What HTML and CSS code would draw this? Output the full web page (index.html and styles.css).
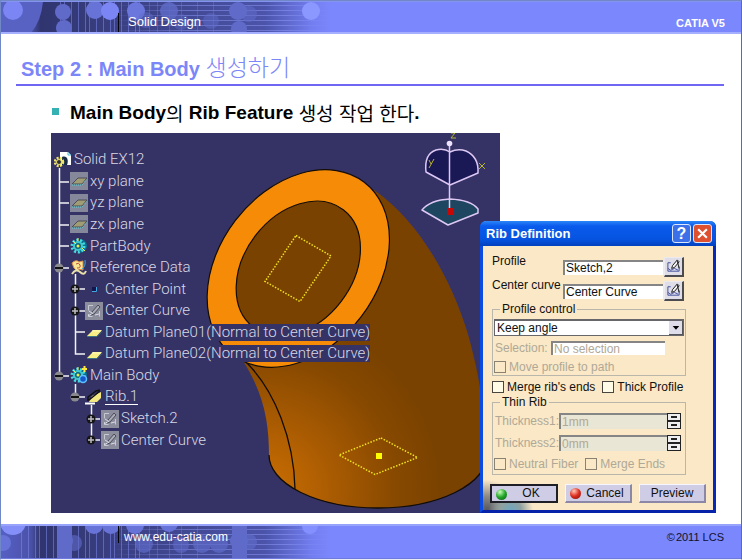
FILE: index.html
```html
<!DOCTYPE html>
<html lang="ko">
<head>
<meta charset="utf-8">
<title>Solid Design - CATIA V5</title>
<link rel="stylesheet" href="styles.css">
</head>
<body>
<svg class="defs" aria-hidden="true">
  <defs>
    <linearGradient id="fade" x1="0" x2="1" y1="0" y2="0">
      <stop offset="0" stop-color="#5660c4"/><stop offset=".09" stop-color="#4a52a8"/><stop offset=".12" stop-color="#30356f"/>
      <stop offset=".55" stop-color="#414892"/><stop offset=".8" stop-color="#4b54aa"/><stop offset=".94" stop-color="#727df0"/><stop offset="1" stop-color="#7b87fc"/>
    </linearGradient>
    <linearGradient id="lineFade" x1="0" x2="1" y1="0" y2="0">
      <stop offset="0" stop-color="#8f9af8" stop-opacity="0"/><stop offset=".35" stop-color="#8f9af8" stop-opacity=".5"/>
      <stop offset=".8" stop-color="#8f9af8" stop-opacity=".5"/><stop offset="1" stop-color="#8f9af8" stop-opacity="0"/>
    </linearGradient>
    <pattern id="bars" width="25" height="34" patternUnits="userSpaceOnUse">
      <path d="M2.500 0V34M9.500 0V34M13.500 0V34M20.500 0V34" stroke="#7c87e6" stroke-opacity=".55"/>
    </pattern>
    <symbol id="i-plane" viewBox="0 0 18 18">
      <path d="M0 0h18v18H0z" fill="#85879b"/><path d="M2 12 8 6h9l-5 6z" fill="#a09c73" stroke="#4b4c58"/><path d="M2 13h10l5-6" fill="none" stroke="#65d0d4" stroke-dasharray="1 1"/>
    </symbol>
    <symbol id="i-datum" viewBox="0 0 18 18">
      <path d="M2 13 8 7h9l-5 6z" fill="#f7ef86"/><path d="M2 13.500h10l5-5" fill="none" stroke="#3d7481"/><path d="M7 8h9" stroke="#fffcc0"/>
    </symbol>
    <symbol id="i-gear" viewBox="0 0 18 18">
      <path d="M10 2c5 0 7 4 7 7s-3 7-8 7z" fill="#0d6d91"/>
      <circle cx="8" cy="9" r="6" fill="none" stroke="#46dbe0" stroke-width="3" stroke-dasharray="2 1.700"/>
      <circle cx="8" cy="9" r="4" fill="#136378" stroke="#3fc8cf" stroke-width="2"/><circle cx="8" cy="9" r="1.500" fill="#e5ef54"/>
      <path d="M3 4 6 7M12 11l3 3M8 1v3" stroke="#e3f25d"/>
    </symbol>
    <symbol id="i-sketch" viewBox="0 0 18 18">
      <path d="M0 0h18v18H0z" fill="#8b8d9d"/><path d="M8 3.500H3.500v5M3.500 12v2.500h4M14.500 9v5.500" fill="none" stroke="#c6c8d4"/>
      <path d="m7 10 6-7 2 2-6 7-3 1z" fill="#a9abb8" stroke="#4a4c58"/><path d="m3 14 5-3M10 13l4-1M4 9l3 2" stroke="#dddee8"/>
    </symbol>
    <symbol id="pen" viewBox="0 0 16 16">
      <path d="M5 4H2v9h12V8M2 10l3 2 4-2 4 2" fill="none" stroke="#3f4d9b"/><path d="m6 10 1-3 5-6 2 2-5 6z" fill="#f4f4f4" stroke="#111"/><path d="m12 2 2 8" stroke="#111"/>
    </symbol>
    <symbol id="plus" viewBox="0 0 10 10"><circle cx="5" cy="5" r="4.500" fill="#151515"/><path d="M2 5h6M5 2v6" stroke="#bcbcc2" stroke-width="1.500"/></symbol>
    <symbol id="minus" viewBox="0 0 10 10"><circle cx="5" cy="5" r="4.500" fill="#8a8a8e"/><path d="M1 5h8" stroke="#111" stroke-width="2"/></symbol>
  </defs>
</svg>
<div class="slide">
  <header class="band band-top">
    <svg class="art" viewBox="0 0 330 32" preserveAspectRatio="xMinYMin slice" aria-hidden="true">
      <rect width="330" height="32" fill="url(#fade)"/>
      <path d="M0 0h42q-2 20-13 32H0z" fill="#5762c2"/>
      <rect x="55" width="90" height="32" fill="url(#bars)"/>
      <path d="M110 3.500H330M110 8.500H330M110 13.500H330M110 18.500H330M110 23.500H330M110 28.500H330" stroke="url(#lineFade)"/>
      <path d="M148.500 0V32M156.500 0V32M168.500 0V32M180.500 0V32M196.500 0V32M212.500 0V32" stroke="#7a85e0" stroke-opacity=".35"/>
      <g fill="#7b86f4"><circle cx="12" cy="8" r="10"/><circle cx="94" cy="8" r="9" fill="#6873d8"/><circle cx="109" cy="9" r="9"/><circle cx="135" cy="9" r="9" fill="#6c77de"/><circle cx="310" cy="9" r="9" fill="#8b98ff"/></g>
      <g fill="#606bc9"><circle cx="62" cy="10" r="8"/><circle cx="63" cy="26" r="8"/><circle cx="168" cy="9" r="9" opacity=".8"/><circle cx="145" cy="18" r="8" opacity=".5"/><circle cx="237" cy="9" r="9"/><circle cx="238" cy="27" r="8"/><circle cx="248" cy="12" r="8" opacity=".6"/><circle cx="180" cy="20" r="8" opacity=".4"/><circle cx="210" cy="19" r="8" opacity=".5"/></g>
    </svg>
    <span class="band-title">Solid Design</span>
    <strong class="brand">CATIA V5</strong>
  </header>

  <main class="content">
    <h1>Step 2 : Main Body <span class="ko">생성하기</span></h1>
    <p class="lead">Main Body<span class="ko">의</span> Rib Feature <span class="ko">생성 작업 한다</span>.</p>

    <div class="stage">
      <div class="viewport">
        <svg class="scene" viewBox="51 133 449 380" preserveAspectRatio="xMinYMin slice" role="img" aria-label="Rib model">
          <defs>
            <radialGradient id="body" gradientUnits="userSpaceOnUse" cx="265" cy="490" r="175">
              <stop offset="0" stop-color="#cb6f02"/><stop offset=".35" stop-color="#ad5d02"/><stop offset=".75" stop-color="#874900"/><stop offset="1" stop-color="#7a4200"/>
            </radialGradient>
          </defs>
          <path d="M374 190C420 222 451 280 467 331C478 368 487 420 487 455A109 53 0 0 1 269 455C269 425 265 395 243 361L230 330Z" fill="url(#body)"/>
          <path d="M487 455A109 53 0 0 1 269 455M245 361C275 390 294 440 295 489" fill="none" stroke="#120c05" stroke-width="1.300"/>
          <g transform="rotate(-52.600 298.300 268.500)" stroke="#120c05" stroke-width="1.200">
            <ellipse cx="298.300" cy="268.500" rx="108.600" ry="79.200" fill="#f58b07"/>
            <ellipse cx="298.300" cy="268.500" rx="74" ry="54" fill="#7a4200"/>
          </g>
          <g fill="none" stroke="#f1e51c" stroke-width="1.500" stroke-dasharray="1.500 1.500"><path d="M296 235.500 331 256 300 301.500 265 281.500Z"/><path d="M381 438 417.500 457.500 375 474.500 339 455Z"/></g>
          <path d="M376 453h6v6h-6z" fill="#ff0"/>
          <g stroke="#dcc8f3" stroke-width="1.500" stroke-linejoin="round">
            <path d="M450 185 426 172Q424 154 436 150Q444 148 450 152Q458 148 466 151Q479 157 478 173Z" fill="#1b1856"/>
            <path d="M422 210Q430 200 450 199Q471 200 478 209V213L448 225Z" fill="#1e4660"/>
            <path d="M449.500 145V210"/>
          </g>
          <circle cx="449.500" cy="143.500" r="2.800" fill="#eee3ff"/><path d="M447 208h7v7h-7z" fill="#c80606"/>
          <path d="M451 133h4l-4 5h5M429 160l2 4M434 159l-5 9M479 163l6 6M485 163l-6 6" fill="none" stroke="#b7b529"/>
          <g fill="none" stroke="#f2f2f6" stroke-width="1.500">
            <path d="M59.500 168V376M60 182h9M60 203h9M60 225h9M60 246h9M60 268h9M60 376h9M75.500 274V354H85M76 332h9M76 289h9M76 311h9M75.500 384V397H85M91.500 405V440M92 419h8M92 440h8"/>
          </g>
          <g>
            <use href="#minus" x="54" y="263" width="10" height="10"/><use href="#minus" x="54" y="371" width="10" height="10"/><use href="#minus" x="70" y="392" width="10" height="10"/>
            <use href="#plus" x="70" y="284" width="10" height="10"/><use href="#plus" x="70" y="306" width="10" height="10"/><use href="#plus" x="86" y="414" width="10" height="10"/><use href="#plus" x="86" y="435" width="10" height="10"/>
          </g>
        </svg>
        <ul class="tree">
          <li class="l0"><svg viewBox="0 0 18 18"><path d="M6 1h8l3 3v10H6z" fill="#fff"/><path d="M14 1v3h3" fill="none" stroke="#47b7cc"/><path d="M8 6c5-2 7 3 5 8H8z" fill="#182c46"/><circle cx="5" cy="11" r="4" fill="none" stroke="#f0e66a" stroke-width="2.500" stroke-dasharray="2 1.200"/><circle cx="5" cy="11" r="2.500" fill="#2b2b3b" stroke="#f0e66a"/></svg><span>Solid EX12</span></li>
          <li class="l1"><svg><use href="#i-plane"/></svg><span>xy plane</span></li>
          <li class="l1"><svg><use href="#i-plane"/></svg><span>yz plane</span></li>
          <li class="l1"><svg><use href="#i-plane"/></svg><span>zx plane</span></li>
          <li class="l1"><svg><use href="#i-gear"/></svg><span>PartBody</span></li>
          <li class="l1"><svg viewBox="0 0 18 18"><path d="M2 4q4-4 7-1l4-1v9q-4-2-6 1L4 9z" fill="#f6e694" stroke="#d98d4c"/><path d="M6 5q3-2 4 1T7 9" fill="none" stroke="#c54a3a"/><path d="M2 15q4-6 8-2t6-1" fill="none" stroke="#e9dfa8" stroke-width="2"/><path d="M15 1q1 6-3 9" fill="none" stroke="#3fa9dc"/></svg><span>Reference Data</span></li>
          <li class="l2"><svg viewBox="0 0 18 18"><path d="M7 7h5v5H7z" fill="#16164e"/><path d="M7 11.500h4.500V7" fill="none" stroke="#47a8e0"/></svg><span>Center Point</span></li>
          <li class="l2"><svg><use href="#i-sketch"/></svg><span>Center Curve</span></li>
          <li class="l2"><svg><use href="#i-datum"/></svg><span class="over">Datum Plane01(Normal to Center Curve)</span></li>
          <li class="l2"><svg><use href="#i-datum"/></svg><span class="over">Datum Plane02(Normal to Center Curve)</span></li>
          <li class="l1"><svg viewBox="0 0 18 18"><use href="#i-gear"/><circle cx="13" cy="13" r="3.500" fill="#1557c7" stroke="#5fc0ff" stroke-width="1.500"/><path d="M12 3h5M14.500 0v6" stroke="#ffe93c" stroke-width="2"/></svg><span>Main Body</span></li>
          <li class="l2"><svg viewBox="0 0 18 18"><path d="M4 14 7 8l9-4v6l-4 4z" fill="#f4e883"/><path d="M3 13V9l8-6 4-1M4 12l11-9" fill="none" stroke="#111" stroke-width="1.500"/><path d="M0 15.500h10" stroke="#fff" stroke-width="2"/></svg><span class="current">Rib.1</span></li>
          <li class="l3"><svg><use href="#i-sketch"/></svg><span>Sketch.2</span></li>
          <li class="l3"><svg><use href="#i-sketch"/></svg><span>Center Curve</span></li>
        </ul>
      </div>

      <form class="dialog" aria-labelledby="dlg-title">
        <div class="titlebar">
          <h2 id="dlg-title">Rib Definition</h2>
          <button type="button" class="cap help" aria-label="Help">?</button>
          <button type="button" class="cap close" aria-label="Close"><svg viewBox="0 0 12 12"><path d="m2 2 8 8M10 2l-8 8" stroke="#fff" stroke-width="2"/></svg></button>
        </div>
        <div class="dlg-body">
          <div class="field"><label for="profile">Profile</label><input id="profile" type="text" value="Sketch,2"><button type="button" class="pick" aria-label="Edit profile"><svg><use href="#pen"/></svg></button></div>
          <div class="field"><label for="curve">Center curve</label><input id="curve" type="text" value="Center Curve"><button type="button" class="pick" aria-label="Edit center curve"><svg><use href="#pen"/></svg></button></div>
          <fieldset class="group control">
            <legend>Profile control</legend>
            <div class="combo"><select aria-label="Profile control"><option>Keep angle</option></select><svg viewBox="0 0 14 13" aria-hidden="true"><path d="M4 5h7L7.500 9z" fill="#000"/></svg></div>
            <div class="line off"><label for="sel">Selection:</label><input id="sel" type="text" value="No selection" disabled></div>
            <label class="check off"><input type="checkbox" disabled>Move profile to path</label>
          </fieldset>
          <div class="checks"><label class="check"><input type="checkbox">Merge rib's ends</label><label class="check"><input type="checkbox">Thick Profile</label></div>
          <fieldset class="group thin">
            <legend>Thin Rib</legend>
            <div class="line off"><label for="t1">Thickness1:</label><input id="t1" type="text" value="1mm" disabled><span class="spin"><button type="button" disabled aria-label="Increase thickness 1"></button><button type="button" disabled aria-label="Decrease thickness 1"></button></span></div>
            <div class="line off"><label for="t2">Thickness2:</label><input id="t2" type="text" value="0mm" disabled><span class="spin"><button type="button" disabled aria-label="Increase thickness 2"></button><button type="button" disabled aria-label="Decrease thickness 2"></button></span></div>
            <div class="checks off"><label class="check"><input type="checkbox" disabled>Neutral Fiber</label><label class="check"><input type="checkbox" disabled>Merge Ends</label></div>
          </fieldset>
          <div class="actions">
            <button type="button" class="default"><i class="ball green"></i><span>OK</span></button>
            <button type="button"><i class="ball red"></i><span>Cancel</span></button>
            <button type="button"><span>Preview</span></button>
          </div>
        </div>
      </form>
    </div>
  </main>

  <footer class="band band-bottom">
    <svg class="art" viewBox="0 0 330 33" preserveAspectRatio="xMinYMin slice" aria-hidden="true">
      <rect width="330" height="33" fill="url(#fade)"/>
      <rect x="20" width="125" height="33" fill="url(#bars)"/>
      <path d="M110 3.500H330M110 8.500H330M110 13.500H330M110 18.500H330M110 23.500H330M110 28.500H330" stroke="url(#lineFade)"/>
      <path d="M148.500 0V33M156.500 0V33M168.500 0V33M180.500 0V33M196.500 0V33" stroke="#7a85e0" stroke-opacity=".35"/>
      <g fill="#6873d8"><circle cx="12" cy="-4" r="13" fill="#8490f8"/><circle cx="2" cy="17" r="8"/><circle cx="93" cy="-1" r="9"/><circle cx="110" cy="-1" r="9"/><circle cx="134" cy="-1" r="9"/><circle cx="168" cy="-3" r="9"/><circle cx="309" cy="0" r="8" fill="#8490ff"/></g>
      <g fill="#606bc9"><path d="M56 0h15v33H56zM231 0h15v33h-15z"/><circle cx="64" cy="15" r="8"/><circle cx="73" cy="17" r="8" opacity=".6"/><circle cx="143" cy="18" r="9" opacity=".7"/><circle cx="180" cy="19" r="8" opacity=".6"/><circle cx="201" cy="18" r="9" opacity=".7"/><circle cx="218" cy="18" r="9" opacity=".7"/><circle cx="238" cy="15" r="9"/><circle cx="248" cy="16" r="8" opacity=".7"/></g>
    </svg>
    <a class="site" href="#">www.edu-catia.com</a>
    <small class="copy">©&#8202;2011 LCS</small>
  </footer>
</div>
</body>
</html>
```

FILE: styles.css
```css
* { box-sizing: border-box; }
body { margin: 0; background: #fff; font-family: "Liberation Sans", "Noto Sans CJK KR", sans-serif; }
.defs { position: absolute; width: 0; height: 0; }
.slide { min-height: 100vh; display: flex; flex-direction: column; border: 1px solid #7188c6; border-right-color: #54709b; border-bottom-color: #e8eaf5; }

.band { position: relative; display: flex; justify-content: space-between; background: #7b87fc; color: #fff; }
.band-top { height: 33px; border-top: 1px solid #8592ef; border-bottom: 2px solid #a5afff; }
.band-bottom { height: 35px; margin-top: auto; border-top: 2px solid #98a3fb; border-bottom: 1px solid #6f7bdc; }
.art { position: absolute; left: 0; top: 0; width: 330px; height: 100%; }
.band-title, .site { position: relative; margin-left: 117px; border-left: 1px solid #05050f; }
.band-title { margin-top: 11px; padding-left: 9px; font-size: 13px; line-height: 18px; }
.brand { padding: 15px 16px 0 0; font-size: 11px; line-height: 12px; }
.site { height: 17px; padding-left: 5px; font-size: 12px; line-height: 22px; color: #fff; text-decoration: none; }
.copy { padding: 4px 17px 0 0; font-size: 11px; line-height: 14px; color: #10102c; }

.content { padding-bottom: 10px; }
h1 { margin: 20px 17px 0 15px; padding: 0 0 0 5px; height: 32px; border-bottom: 2px solid #6f66f3; font-size: 20px; line-height: 30px; color: #7b86f8; white-space: nowrap; }
.ko { font-family: "Noto Sans CJK KR", sans-serif; font-weight: 400; }
h1 .ko { font-size: 23px; font-weight: 300; line-height: 20px; }
.lead { display: flex; align-items: center; margin: 14px 0 7px 51px; font-size: 19px; font-weight: 700; line-height: 26px; height: 26px; color: #000; white-space: pre; }
.lead::before { content: ""; width: 7px; height: 7px; margin: 0 11px 4px 0; background: #35b0b3; }
.lead .ko { font-size: 19px; line-height: 20px; }

.stage { position: relative; margin: 0 25px 0 50px; }
.viewport { position: relative; width: 100%; max-width: 449px; height: 380px; padding-top: 16px; background: #353366; }
.scene { position: absolute; inset: 0; width: 100%; height: 100%; }
.tree { position: relative; display: grid; grid-template-rows: repeat(14, 1fr); height: 302px; margin: 0; padding: 0; list-style: none; color: #d8d8e4; font-family: Roboto, "Liberation Sans", sans-serif; font-size: 15px; font-weight: 300; line-height: 17px; white-space: nowrap; }
.tree li { display: flex; align-items: center; gap: 2px; }
.tree svg { width: 18px; height: 18px; flex: none; }
.l0 { padding-left: 3px; }
.l1 { padding-left: 19px; }
.l2 { padding-left: 34px; }
.l3 { padding-left: 50px; }
.over { background: #353366; }
.current { border-bottom: 1px solid #fff; line-height: 15px; }

.dialog { position: absolute; top: 88px; right: 0; width: 236px; border: 3px solid #0b4be0; border-top: 0; border-right-color: #0529b8; border-bottom-color: #0622a8; border-radius: 6px 6px 0 0; background: #fae8c7; color: #111; font-size: 12px; line-height: 14px; }
.titlebar { display: flex; align-items: center; gap: 2px; height: 25px; margin: 0 -3px; padding: 0 4px 0 6px; border-radius: 6px 6px 0 0; background: linear-gradient(#2c86f8, #0a5bec 20%, #0653e0 75%, #0340bd); }
.titlebar h2 { flex: 1; margin: 0; font-size: 13px; line-height: 20px; color: #fff; }
.cap { display: grid; place-items: center; width: 19px; height: 19px; padding: 0; border: 1px solid #dbe6ff; border-radius: 3px; background: #3b70e8; color: #fff; font: 700 16px/16px "Liberation Sans", sans-serif; }
.close { background: #de5130; }
.cap svg { width: 13px; height: 13px; }
.dlg-body { padding: 11px 7px 7px; background: radial-gradient(circle at 28px 100%, #6da7c1 0, #8fa1a0 10px, transparent 22px), radial-gradient(circle at 4px 100%, #555761 0, #8e8a85 14px, transparent 30px), #fae8c7; }
.dialog input, .dialog select { min-width: 0; margin: 0; color: #111; font: 12px/14px "Liberation Sans", sans-serif; border-radius: 0; }
.dialog input[type="text"] { border: 0; border-top: 2px solid #858585; border-left: 2px solid #858585; padding: 0 1px; background: #fff; }
.field { display: flex; align-items: center; height: 20px; margin: 0 22px 4px 2px; }
.field label { flex: 1; padding-bottom: 12px; white-space: nowrap; }
.field input { width: 100px; height: 15px; }
.pick { width: 20px; height: 20px; margin-left: 1px; padding: 1px; border: 1px solid #ece9ef; border-right: 2px solid #4b4b50; border-bottom: 2px solid #4b4b50; background: #dedde8; }
.pick svg { display: block; width: 15px; height: 15px; }
.group { display: flex; flex-direction: column; min-width: 0; margin: -3px 20px 0 2px; padding: 3px 1px 1px; border: 1px solid #b9b6ac; }
.group legend { margin-left: 6px; padding: 0 2px; height: 14px; }
.control { gap: 5px; }
.combo { position: relative; height: 17px; }
.combo select { appearance: none; display: block; width: 100%; height: 17px; padding: 0 18px 0 2px; border: 1px solid #66666b; border-top-width: 2px; background: #fff; }
.combo svg { position: absolute; right: 1px; top: 2px; width: 14px; height: 14px; background: #e0ddea; border-right: 1px solid #55555c; border-bottom: 1px solid #55555c; pointer-events: none; }
.line { display: flex; align-items: center; padding: 0 3px 0 1px; }
.off, .dialog .off input { color: #b0a897; }
.control .line { height: 14px; padding-right: 19px; }
.line label { flex: 1; white-space: nowrap; }
.control .line input { width: 114px; height: 14px; }
.check { display: flex; align-items: center; gap: 3px; height: 14px; white-space: nowrap; }
.dialog input[type="checkbox"] { appearance: none; width: 12px; height: 12px; border: 1px solid #48463f; background: #fffbe6; }
.dialog .off input[type="checkbox"], .dialog .off.check input { border-color: #8b8371; background: #fae8c7; }
.checks { display: flex; gap: 7px; }
.dlg-body > .checks { margin: 4px 0 1px 2px; }
.thin { gap: 6px; margin-top: 0; padding: 4px 1px 3px; }
.thin .line { height: 16px; }
.thin .line input[type="text"] { width: 108px; height: 16px; background: #e9e6d5; }
.spin { display: flex; flex-direction: column; width: 14px; height: 16px; }
.spin button { flex: 1; padding: 0; border: 1px solid #222; background: linear-gradient(#222, #222) center / 6px 2px no-repeat #eee; }
.actions { display: flex; gap: 7px; margin: 9px 0 0; }
.actions button { position: relative; flex: 1; height: 19px; padding: 0; border: 1px solid #f7f7ff; border-right: 2px solid #8a88a6; border-bottom: 2px solid #8a88a6; background: #cfcce6; color: #111; font: 12px/15px "Liberation Sans", sans-serif; }
.actions .default { border: 2px solid #1e1e26; }
.actions .default span, .actions .ball + span { padding-left: 14px; }
.ball { position: absolute; left: 4px; top: 3px; width: 11px; height: 11px; border-radius: 50%; }
.green { background: radial-gradient(circle at 4px 3px, #c9ffb8, #22a528 50%, #0a5a12); }
.red { background: radial-gradient(circle at 4px 3px, #ffc8b8, #dc2a1c 50%, #7a0f0a); }
```
